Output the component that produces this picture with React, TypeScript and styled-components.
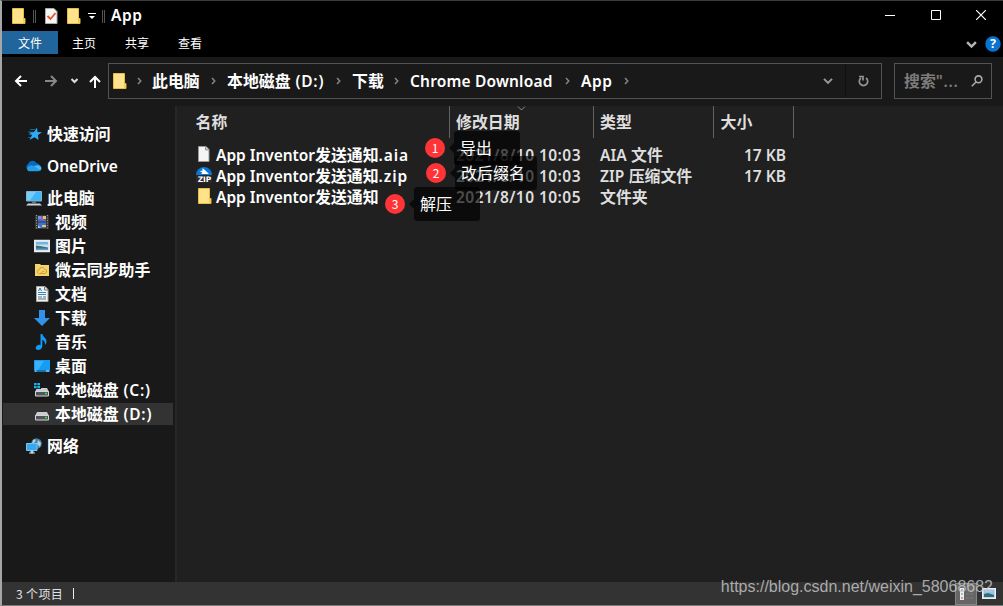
import React from "react";
import styled, { createGlobalStyle } from "styled-components";

const Global = createGlobalStyle`
  * { box-sizing: border-box; }
  body { margin: 0; background: #191919; overflow: hidden; }
`;

const Window = styled.div`
  position: relative;
  width: 1003px;
  height: 606px;
  display: flex;
  flex-direction: column;
  border-top: 1px solid #3b3b3b;
  border-left: 2px solid #a4a6a8;
  border-bottom: 1px solid #7b7b7b;
  background: #191919;
  color: #fff;
  overflow: hidden;
  font: 600 16px/24px "Noto Sans", "Noto Sans CJK SC", sans-serif;
  white-space: nowrap;
`;
const Latin = styled.span<{ $ls?: number }>`
  font-size: 15.5px;
  font-weight: 650;
  line-height: 1;
  letter-spacing: ${(p) => p.$ls ?? 0.33}px;
  white-space: pre;
`;
const Cjk = styled.span`
  font-family: "Noto Sans CJK SC", sans-serif;
  font-size: 15.9px;
  font-weight: 700;
  line-height: 1;
`;

const TitleBar = styled.header`
  display: flex;
  align-items: center;
  height: 30px;
  flex: none;
  padding-left: 10px;
  background: #000;
`;
const QuickIcon = styled.span<{ $gap: number }>`
  display: flex;
  width: 14px;
  margin-right: ${(p) => p.$gap}px;
`;
const Grip = styled.i<{ $gap: number }>`
  width: 3px;
  height: 13px;
  border: solid #555;
  border-width: 0 1px;
  margin-right: ${(p) => p.$gap}px;
`;
const Title = styled.span`
  flex: 1;
  line-height: 28px;
  padding-bottom: 2px;
`;
const WindowButton = styled.button`
  width: 46px;
  height: 29px;
  padding: 0 0 2px;
  border: 0;
  background: none;
  display: grid;
  place-items: center;
  &:last-child { width: 44px; }
`;
const Ribbon = styled.nav`
  display: flex;
  height: 26px;
  flex: none;
  background: #000;
`;
const Tab = styled.span<{ $active?: boolean; $w: number }>`
  width: ${(p) => p.$w}px;
  height: 23px;
  background: ${(p) => (p.$active ? "#20659c" : "transparent")};
  font: 400 12px/24px "Noto Sans CJK SC", sans-serif;
  text-align: center;
`;
const RibbonEnd = styled.span`
  display: flex;
  align-items: center;
  gap: 8px;
  margin-left: auto;
  padding-right: 2px;
`;
const AddressRow = styled.div`
  display: flex;
  align-items: flex-start;
  height: 49px;
  flex: none;
  padding: 6px 11px 0 12px;
`;
const NavButtons = styled.div`
  width: 94px;
  height: 36px;
`;
const AddressBox = styled.div`
  display: flex;
  align-items: center;
  width: 774px;
  height: 36px;
  margin-right: 12px;
  padding-left: 4px;
  border: 1px solid #535353;
`;
const Separator = styled.span<{ $w?: number }>`
  width: ${(p) => p.$w ?? 27}px;
  display: flex;
  justify-content: center;
`;
const Crumb = styled.span<{ $w: number }>`
  width: ${(p) => p.$w}px;
  line-height: 34px;
`;
const AddressTail = styled.span`
  display: flex;
  align-items: center;
  height: 34px;
  margin-left: auto;
`;
const DropCell = styled.span`
  width: 35px;
  display: grid;
  place-items: center;
`;
const RefreshCell = styled(DropCell)`
  width: 36px;
  height: 34px;
  border-left: 1px solid #111;
`;
const Search = styled.div`
  display: flex;
  justify-content: space-between;
  align-items: center;
  width: 98px;
  height: 36px;
  border: 1px solid #535353;
  padding: 0 8px 0 9px;
  color: #7c7c7c;
`;
const Main = styled.div`
  display: flex;
  flex: 1;
  min-height: 0;
`;
const Sidebar = styled.aside`
  width: 175px;
  flex: none;
  padding: 16px 2px 0 1px;
  border-right: 2px solid #272727;
`;
const SideRow = styled.div<{ $child?: boolean; $selected?: boolean; $after?: number }>`
  display: flex;
  align-items: center;
  height: ${(p) => (p.$selected ? 22 : 24)}px;
  margin: ${(p) => (p.$selected ? "1px 0" : "0")};
  margin-bottom: ${(p) => p.$after ?? (p.$selected ? 1 : 0)}px;
  padding-left: ${(p) => (p.$child ? 31 : 23)}px;
  background: ${(p) => (p.$selected ? "#333" : "transparent")};
`;
const SideIcon = styled.span`
  display: flex;
  width: 16px;
  margin-right: 5px;
`;
const Files = styled.main`
  flex: 1;
  background: #202020;
`;
const Header = styled.div`
  display: flex;
  height: 32px;
  margin-bottom: 6px;
  color: #dedede;
`;
const HeadCell = styled.div<{ $w: number; $pad: number }>`
  position: relative;
  width: ${(p) => p.$w}px;
  padding-left: ${(p) => p.$pad}px;
  border-right: 1px solid #636363;
  line-height: 33px;
`;
const SortMark = styled.svg`
  position: absolute;
  left: 67px;
  top: 0;
`;
const FileRow = styled.div`
  display: flex;
  height: 21px;
  line-height: 23px;
  color: #dedede;
`;
const NameCell = styled.div`
  display: flex;
  width: 279px;
  padding-left: 19px;
  color: #fff;
`;
const FileIcon = styled.span`
  display: flex;
  width: 16px;
  height: 19px;
  align-items: center;
  margin-right: 4px;
`;
const Cell = styled.div<{ $w: number; $right?: boolean }>`
  width: ${(p) => p.$w}px;
  text-align: ${(p) => (p.$right ? "right" : "left")};
`;
const StatusBar = styled.footer`
  display: flex;
  align-items: center;
  height: 23px;
  flex: none;
  background: #333;
  padding: 0 3px 0 14px;
  font: 400 12px/22px "Noto Sans CJK SC", sans-serif;
  letter-spacing: 0.35px;
  color: #e2e2e2;
`;
const Caret = styled.i`
  width: 1px;
  height: 11px;
  margin-left: 10px;
  background: #eee;
`;
const ViewButton = styled.span<{ $active?: boolean }>`
  width: ${(p) => (p.$active ? 22 : 23)}px;
  height: 22px;
  display: grid;
  place-items: center;
  background: ${(p) => (p.$active ? "#666" : "transparent")};
  border: ${(p) => (p.$active ? "1px solid #858585" : "0")};
`;
const Views = styled.span`
  display: flex;
  margin-left: auto;
`;
const Badge = styled.span<{ $x: number; $y: number }>`
  position: absolute;
  left: ${(p) => p.$x}px;
  top: ${(p) => p.$y}px;
  width: 20px;
  height: 20px;
  border-radius: 50%;
  background: #ff3437;
  font: 400 12px/19px "Noto Sans CJK SC", sans-serif;
  text-align: center;
`;
const Tip = styled.span<{ $x: number; $y: number; $w: number }>`
  position: absolute;
  left: ${(p) => p.$x}px;
  top: ${(p) => p.$y}px;
  width: ${(p) => p.$w}px;
  height: 34px;
  border-radius: 3px;
  background: rgba(0, 0, 0, 0.66);
  font: 400 16px/32px "Noto Sans CJK SC", sans-serif;
  padding-left: 6px;
  &::before {
    content: "";
    position: absolute;
    left: -5px;
    top: 12px;
    border: solid transparent;
    border-width: 5px 5px 5px 0;
    border-right-color: rgba(0, 0, 0, 0.66);
  }
`;
const Watermark = styled.span`
  position: absolute;
  right: 10px;
  bottom: 6px;
  font: 400 16px/24px "Liberation Sans", sans-serif;
  color: rgba(200, 200, 200, 0.82);
`;

const folderShape = (
  <>
    <path d="M.5.5h11v10h1.500v5H.5z" fill="#ffe38c" stroke="#e8bd3d" />
    <path d="M11 11h2v4h-2z" fill="#f2cb55" />
  </>
);
const Folder = () => (
  <svg width="14" height="16" viewBox="0 0 14 16">{folderShape}</svg>
);
const Checked = () => (
  <svg width="14" height="16" viewBox="0 0 14 16">
    <path d="M.5.5h8.500l3 3v12H.5z" fill="#f5f5f5" stroke="#aaa" />
    <path d="m2.500 8 3 3 5-6" fill="none" stroke="#e65425" strokeWidth="1.800" />
  </svg>
);
const Chevron = ({ s = 8, c = "#999", w = 1.6 }: { s?: number; c?: string; w?: number }) => (
  <svg width={s} height={s} viewBox="0 0 8 8">
    <path d="m.8 2.300 3.200 3.200 3.200-3.200" fill="none" stroke={c} strokeWidth={w} />
  </svg>
);
const Right = () => (
  <svg width="5" height="8" viewBox="0 0 5 8">
    <path d="m1 1 2.800 3L1 7" fill="none" stroke="#8a8a8a" strokeWidth="1.400" />
  </svg>
);

const Drive = ({ win }: { win?: boolean }) => (
  <svg width="16" height="16" viewBox="0 0 16 16">
    <path d="m3 6h10l2 4H1z" fill="#c9cdd0" />
    <path d="M1.500 9.500h13V14h-13z" fill="#505456" stroke="#d3d6d8" />
    <path d="M11 11.500h2" stroke="#37e34b" strokeWidth="1.500" />
    {win && (
      <>
        <path d="M0 0h7v7H0z" fill="#191919" />
        <path d="M0 1h2.600v2.300H0zm3.300 0H6v2.300H3.300zM0 4h2.600v2.300H0zm3.300 0H6v2.300H3.300z" fill="#14b5ee" />
      </>
    )}
  </svg>
);

const icons: Record<string, React.ReactNode> = {
  star: (
    <svg width="16" height="16" viewBox="0 0 16 16">
      <path d="m11 1.500.5 4.500 4.500.2-4 2.800.5 5-4-2.700L3.500 14l2.500-4.800-3-2.700 5-.5z" fill="#2cabf4" />
      <path d="M4 3.500h5M2 6h5M3 8.500h3M2 11.500h3" stroke="#1676ae" strokeWidth=".8" />
    </svg>
  ),
  cloud: (
    <svg width="16" height="16" viewBox="0 0 16 16">
      <path d="M2 12a3.500 3.500 0 0 1 0-6 4.700 4.700 0 0 1 8.500-1A4 4 0 0 1 14 8l-5 4z" fill="#0869bd" />
      <path d="M2.500 13.300a3 3 0 0 1 .5-5.300c2-1.200 3.500-.6 5 0L12 7.300A3.200 3.200 0 0 1 13 13.300z" fill="#269ce7" />
      <path d="m8 8 6.500 4.500A3 3 0 0 0 12.500 7.300z" fill="#49b9f4" />
    </svg>
  ),
  pc: (
    <svg width="16" height="16" viewBox="0 0 16 16">
      <path d="M.5 1.500h15v9.500H.5z" fill="#43b4f5" stroke="#78b7d8" />
      <path d="M1 2h9L4 10.500H1z" fill="#79cbfa" />
      <path d="M6 11.500h4v1.500H6z" fill="#6a7880" />
      <path d="M2 13.500h12l2 2H0z" fill="#cdd5d9" />
    </svg>
  ),
  video: (
    <svg width="16" height="16" viewBox="0 0 16 16">
      <path d="M1 1h14v14H1z" fill="#373737" />
      <path d="M2.500 1v14M13.500 1v14" stroke="#999" strokeDasharray="1 1.500" />
      <path d="M4 2h8v5.500H4zM4 8.500h8V14H4z" fill="#3f70d1" />
      <path d="M4 2h3v3H4z" fill="#6398ed" />
      <path d="M7 3h2v3H7z" fill="#d04aad" />
      <path d="M9 2h3v3H9zM8 11h4v2H8z" fill="#eac64b" />
      <path d="m4 11 3 3H4z" fill="#9ac2f1" />
    </svg>
  ),
  image: (
    <svg width="16" height="16" viewBox="0 0 16 16">
      <path d="M.5 2.500h15v11H.5z" fill="#c7e2f3" stroke="#ededed" strokeWidth="1.500" />
      <path d="M2 4h12v2.500H2z" fill="#72b4e2" />
      <path d="m2 7.500 4 .5 8 1.500V11H2z" fill="#456f6b" />
      <path d="M2 10.500h12V12H2z" fill="#5e99d5" />
    </svg>
  ),
  weiyun: (
    <svg width="16" height="16" viewBox="0 0 16 16">
      <path d="M1 2h5l1 1h8v11H1z" fill="#f4d46e" />
      <path d="M4.500 11.500a2 2 0 0 1 .5-3.700A3 3 0 0 1 10.500 7a2.300 2.300 0 0 1 .5 4.500H5.500c1 0 2-.5 2.500-1.500s2-1 2.500 0" fill="none" stroke="#d49a29" />
    </svg>
  ),
  doc: (
    <svg width="16" height="16" viewBox="0 0 16 16">
      <path d="M2.500.5h8.500l3 3v12H2.500z" fill="#f2f2f2" stroke="#aaa" />
      <path d="M10.500 1v3H14" fill="none" stroke="#777" />
      <path d="M4 6.500h8M4 8.500h8" stroke="#3289c8" />
      <path d="m4.500 5 1.500-3 1.500 3" fill="none" stroke="#297bb8" />
      <path d="M4 11h4m-4 2h8m-3-2h3" stroke="#537580" />
    </svg>
  ),
  down: (
    <svg width="16" height="16" viewBox="0 0 16 16">
      <path d="M5 0h6v8h5l-8 8-8-8h5z" fill="#3291e8" />
    </svg>
  ),
  music: (
    <svg width="16" height="16" viewBox="0 0 16 16">
      <path d="M6.500 0h1.800c.4 3 4.700 4 4.200 8-.3 1.500-1 2.500-1.500 3 .3-3-1-4.500-2.700-5v6.500C8 15 5.800 16 4 16c-3 0-3-4 .2-5 1-.3 1.700 0 2.300.2z" fill="#129bf5" />
    </svg>
  ),
  desktop: (
    <svg width="16" height="16" viewBox="0 0 16 16">
      <path d="M0 2h16v12H0z" fill="#169cf4" />
      <path d="M1 3h9l-6 9H1z" fill="#3bb1fb" />
      <path d="M0 12h16v2H0z" fill="#1474ad" />
      <path d="M1 13h1.500M12 13h3" stroke="#d6efff" />
    </svg>
  ),
  c: <Drive win />,
  d: <Drive />,
  network: (
    <svg width="16" height="16" viewBox="0 0 16 16">
      <circle cx="10.500" cy="5.500" r="5.300" fill="#477f9e" />
      <path d="M7 2c3-2 3 0 2 2L6 6zM12 2l3 3-1 4-3-3z" fill="#a7d3e6" />
      <path d="M.5 5.500h10.500v7H.5z" fill="#35a8ef" stroke="#78c7ef" />
      <path d="M5 13h2v2H5zM3 15h6" stroke="#cad4d8" fill="#aaa" />
    </svg>
  ),
};

type Side = { icon: string; cjk?: string; latin?: string; child?: boolean; selected?: boolean; after?: number };
const side: Side[] = [
  { icon: "star", cjk: "快速访问", after: 8 },
  { icon: "cloud", latin: "OneDrive", after: 8 },
  { icon: "pc", cjk: "此电脑" },
  { icon: "video", cjk: "视频", child: true },
  { icon: "image", cjk: "图片", child: true },
  { icon: "weiyun", cjk: "微云同步助手", child: true },
  { icon: "doc", cjk: "文档", child: true },
  { icon: "down", cjk: "下载", child: true },
  { icon: "music", cjk: "音乐", child: true },
  { icon: "desktop", cjk: "桌面", child: true },
  { icon: "c", cjk: "本地磁盘", latin: " (C:)", child: true },
  { icon: "d", cjk: "本地磁盘", latin: " (D:)", child: true, selected: true, after: 9 },
  { icon: "network", cjk: "网络" },
];

const AiaIcon = () => (
  <svg width="16" height="16" viewBox="0 0 16 16">
    <path d="M2.500.5H10l3 3v12H2.500z" fill="#f5f5f5" stroke="#999" />
    <path d="M9.500 1v3H13" fill="#ccc" stroke="#999" />
  </svg>
);
const ZipIcon = () => (
  <svg width="16" height="16" viewBox="0 0 16 16">
    <path d="M0 8a8 8 0 0 1 16 0z" fill="#0878d5" />
    <path d="m6.500 1 4 3.500 2.500 2.500H5l1.500-1.500-3-1.500 3-.3z" fill="#fff" />
    <path d="M0 8h16v8H0z" fill="#292929" />
    <text x="8.500" y="14.800" textAnchor="middle" fontFamily="DejaVu Sans" fontSize="7.500" fontWeight="700" fill="#fff">ZIP</text>
  </svg>
);
const FolderIcon = () => (
  <svg width="16" height="16" viewBox="-2 0 16 16">{folderShape}</svg>
);

const files = [
  { icon: <AiaIcon />, ext: ".aia", time: "2021/8/10 10:03", kind: "AIA ", kindCjk: "文件", size: "17 KB" },
  { icon: <ZipIcon />, ext: ".zip", time: "2021/8/10 10:03", kind: "ZIP ", kindCjk: "压缩文件", size: "17 KB" },
  { icon: <FolderIcon />, ext: "", time: "2021/8/10 10:05", kind: "", kindCjk: "文件夹", size: "" },
];

export default function App() {
  return (
    <Window>
      <Global />
      <TitleBar>
        <QuickIcon $gap={7}><Folder /></QuickIcon>
        <Grip $gap={9} />
        <QuickIcon $gap={8}><Checked /></QuickIcon>
        <QuickIcon $gap={7}><Folder /></QuickIcon>
        <QuickIcon $gap={0}>
          <svg width="8" height="8" viewBox="0 0 8 8"><path d="M0 1.500h8" stroke="#fff" /><path d="M1 4h6L4 7z" fill="#fff" /></svg>
        </QuickIcon>
        <Grip $gap={6} />
        <Title><Latin $ls={0.6}>App</Latin></Title>
        <WindowButton><svg width="10" height="10"><path d="M0 5.500h10" stroke="#fff" /></svg></WindowButton>
        <WindowButton><svg width="10" height="10"><path d="M.5.5h9v9h-9z" fill="none" stroke="#fff" /></svg></WindowButton>
        <WindowButton><svg width="10" height="10"><path d="m0 0 10 10M10 0 0 10" stroke="#fff" strokeWidth="1.200" /></svg></WindowButton>
      </TitleBar>
      <Ribbon>
        <Tab $active $w={56}>文件</Tab>
        <Tab $w={52}>主页</Tab>
        <Tab $w={54}>共享</Tab>
        <Tab $w={52}>查看</Tab>
        <RibbonEnd>
          <Chevron s={11} c="#b5b5b5" w={1.8} />
          <svg width="16" height="16" viewBox="0 0 16 16">
            <circle cx="8" cy="8" r="7.700" fill="#0873d1" />
            <text x="8" y="12.300" textAnchor="middle" fontFamily="Noto Sans" fontSize="12.500" fontWeight="700" fill="#fff">?</text>
          </svg>
        </RibbonEnd>
      </Ribbon>
      <AddressRow>
        <NavButtons>
          <svg width="94" height="36" fill="none" strokeWidth="2">
            <path d="M13 18H2m5-5-5 5 5 5" stroke="#fff" />
            <path d="M31 18h11m-5-5 5 5-5 5" stroke="#888" />
            <path d="m57.500 16 3 3 3-3" stroke="#ddd" />
            <path d="M81 25V14m-5 5 5-5 5 5" stroke="#fff" />
          </svg>
        </NavButtons>
        <AddressBox>
          <Folder />
          <Separator $w={25}><Right /></Separator>
          <Crumb $w={48}><Cjk>此电脑</Cjk></Crumb>
          <Separator><Right /></Separator>
          <Crumb $w={98}><Cjk>本地磁盘</Cjk><Latin $ls={0.8}> (D:)</Latin></Crumb>
          <Separator><Right /></Separator>
          <Crumb $w={31}><Cjk>下载</Cjk></Crumb>
          <Separator><Right /></Separator>
          <Crumb $w={144}><Latin $ls={0.18}>Chrome Download</Latin></Crumb>
          <Separator><Right /></Separator>
          <Crumb $w={32}><Latin $ls={0.6}>App</Latin></Crumb>
          <Separator><Right /></Separator>
          <AddressTail>
            <DropCell><Chevron s={10} /></DropCell>
            <RefreshCell>
              <svg width="11" height="12" viewBox="0 0 11 12" fill="none" stroke="#949494" strokeWidth="1.700">
                <path d="M8 3a4.200 4.200 0 1 1-5 0M1 1.500h4v4" />
              </svg>
            </RefreshCell>
          </AddressTail>
        </AddressBox>
        <Search>
          <span><Cjk>搜索</Cjk><Latin $ls={0.7}>"...</Latin></span>
          <svg width="12" height="12" viewBox="0 0 12 12" fill="none" stroke="#aaa" strokeWidth="1.600">
            <circle cx="7.500" cy="4.300" r="3.400" /><path d="M5 7 .8 11.200" />
          </svg>
        </Search>
      </AddressRow>
      <Main>
        <Sidebar>
          {side.map((s) => (
            <SideRow key={s.icon} $child={s.child} $selected={s.selected} $after={s.after}>
              <SideIcon>{icons[s.icon]}</SideIcon>
              <span>
                {s.cjk && <Cjk>{s.cjk}</Cjk>}
                {s.latin && <Latin $ls={s.cjk ? 0.8 : -0.05}>{s.latin}</Latin>}
              </span>
            </SideRow>
          ))}
        </Sidebar>
        <Files>
          <Header>
            <HeadCell $w={273} $pad={18.5}><Cjk>名称</Cjk></HeadCell>
            <HeadCell $w={144} $pad={6}>
              <SortMark width="9" height="5"><path d="m1 .5 3.500 3.500L8 .5" fill="none" stroke="#888" /></SortMark>
              <Cjk>修改日期</Cjk>
            </HeadCell>
            <HeadCell $w={120} $pad={6}><Cjk>类型</Cjk></HeadCell>
            <HeadCell $w={80} $pad={6.5}><Cjk>大小</Cjk></HeadCell>
          </Header>
          {files.map((f) => (
            <FileRow key={f.kindCjk}>
              <NameCell>
                <FileIcon>{f.icon}</FileIcon>
                <span><Latin $ls={-0.04}>App Inventor</Latin><Cjk>发送通知</Cjk><Latin $ls={0.9}>{f.ext}</Latin></span>
              </NameCell>
              <Cell $w={144}><Latin $ls={0.45}>{f.time}</Latin></Cell>
              <Cell $w={120}><Latin $ls={0.1}>{f.kind}</Latin><Cjk>{f.kindCjk}</Cjk></Cell>
              <Cell $w={66} $right><Latin $ls={0}>{f.size}</Latin></Cell>
            </FileRow>
          ))}
        </Files>
      </Main>
      <StatusBar>
        3 个项目
        <Caret />
        <Views>
          <ViewButton $active>
            <svg width="16" height="14" viewBox="0 0 16 14">
              <path d="M2 1h4v12H2z" fill="#eee" />
              <path d="M3 3h2M3 7h2" stroke="#4e87bd" /><path d="M3 11h2" stroke="#b44" />
              <path d="M8 3h3m1 0h3M8 7h3m1 0h3M8 11h3m1 0h3" stroke="#7d7d7d" />
            </svg>
          </ViewButton>
          <ViewButton>
            <svg width="14" height="11" viewBox="0 0 14 11">
              <path d="M.5.5h13v10H.5z" fill="#8fc2ee" stroke="#eee" strokeWidth="2" />
              <path d="m2 6 4-1 6 2v2H2z" fill="#386d70" />
            </svg>
          </ViewButton>
        </Views>
      </StatusBar>
      <Tip $x={452} $y={130} $w={66}>导出</Tip>
      <Tip $x={453} $y={155} $w={82}>改后缀名</Tip>
      <Tip $x={412} $y={186} $w={66}>解压</Tip>
      <Badge $x={423} $y={137}>1</Badge>
      <Badge $x={424} $y={162}>2</Badge>
      <Badge $x={383} $y={193}>3</Badge>
      <Watermark>https://blog.csdn.net/weixin_58068682</Watermark>
    </Window>
  );
}
